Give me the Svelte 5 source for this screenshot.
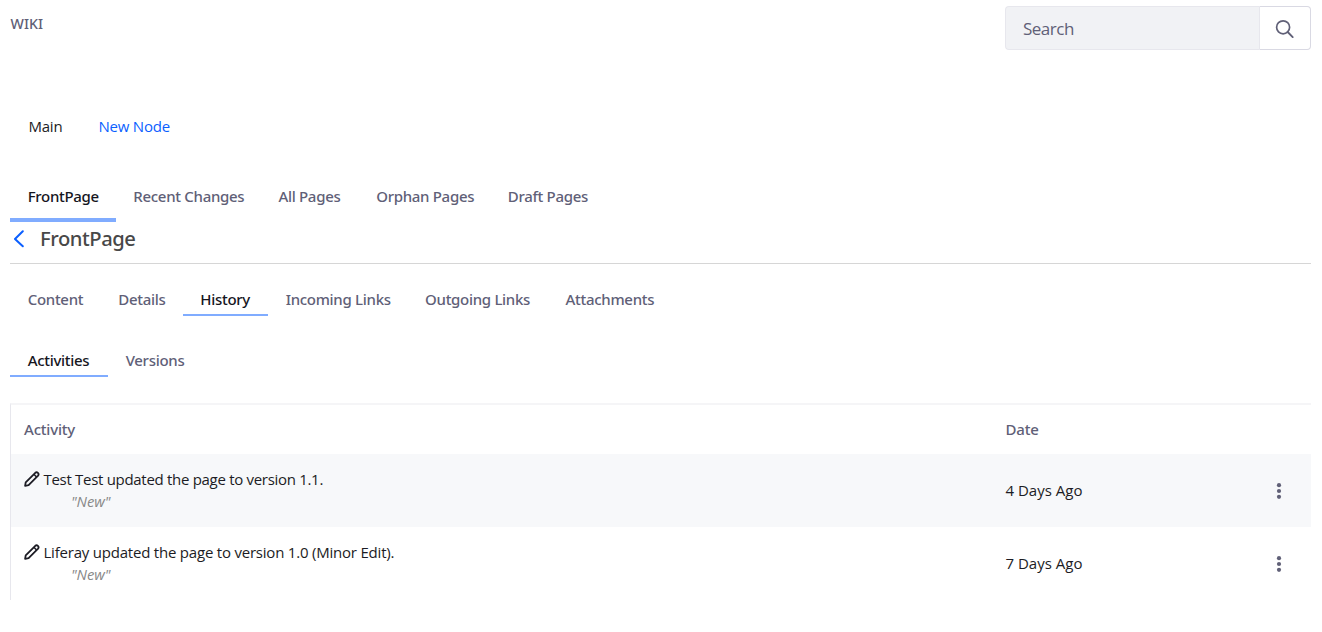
<script>
  const pageTabs = [
    { label: 'FrontPage', width: 105.6, active: true },
    { label: 'Recent Changes', width: 145.1 },
    { label: 'All Pages', width: 97.8 },
    { label: 'Orphan Pages', width: 131.6 },
    { label: 'Draft Pages', width: 115.6 }
  ];
  const viewTabs = [
    { label: 'Content', width: 90.6 },
    { label: 'Details', width: 82 },
    { label: 'History', width: 85.4, active: true },
    { label: 'Incoming Links', width: 139.4 },
    { label: 'Outgoing Links', width: 140.5 },
    { label: 'Attachments', width: 123 }
  ];
  const historyTabs = [
    { label: 'Activities', width: 98, active: true },
    { label: 'Versions', width: 93 }
  ];
  const rows = [
    { text: 'Test Test updated the page to version 1.1.', note: '"New"', date: '4 Days Ago', spacing: -0.3 },
    { text: 'Liferay updated the page to version 1.0 (Minor Edit).', note: '"New"', date: '7 Days Ago', spacing: -0.21 }
  ];
</script>

{#snippet tabs(items, kind)}
  <nav class="tabs {kind}">
    {#each items as tab}
      <a class="tab" class:active={tab.active} style="width: {tab.width}px">{tab.label}</a>
    {/each}
  </nav>
{/snippet}

<main class="portlet">
  <header class="top">
    <h1>WIKI</h1>
    <form class="search">
      <div class="field">Search</div>
      <div class="submit">
        <svg width="20" height="20" viewBox="0 0 20 20" fill="none" stroke="#606077">
          <circle cx="8.1" cy="8.3" r="6.5" stroke-width="1.7" />
          <path d="M12.7 13L17.7 18.1" stroke-width="1.9" stroke-linecap="round" />
        </svg>
      </div>
    </form>
  </header>

  <nav class="nodes">
    <span>Main</span>
    <a>New Node</a>
  </nav>

  {@render tabs(pageTabs, 'primary')}

  <div class="title">
    <svg width="12" height="18" viewBox="0 0 12 18" fill="none" stroke="#0b5fff" stroke-width="2" stroke-linecap="round" stroke-linejoin="round">
      <path d="M9.8 1.3L2 9L9.8 16.3" />
    </svg>
    <h2>FrontPage</h2>
  </div>

  {@render tabs(viewTabs, 'view')}
  {@render tabs(historyTabs, 'history')}

  <section class="table">
    <div class="row head">
      <div>Activity</div>
      <div>Date</div>
      <div></div>
    </div>
    {#each rows as row, i}
      <div class="row" class:striped={i % 2 === 0}>
        <div class="activity">
          <div class="line">
            <svg width="16" height="16" viewBox="0 0 16 16" fill="none" stroke="#1c1c24" stroke-width="1.8" stroke-linejoin="round">
              <path d="M1.1 14.8L1.7 11.4L11.3 1.8Q12.6 .7 13.9 1.9Q15.2 3.2 14.1 4.6L4.6 14.1Z" />
              <path d="M9.9 3.3L12.6 6" stroke-width="1.5" />
            </svg>
            <span class="text" style="letter-spacing: {row.spacing}px">{row.text}</span>
          </div>
          <em>{row.note}</em>
        </div>
        <div class="date">{row.date}</div>
        <div class="actions">
          <svg width="6" height="16" viewBox="0 0 6 16" fill="#606077">
            <circle cx="3" cy="2.2" r="2.1" />
            <circle cx="3" cy="8" r="2.1" />
            <circle cx="3" cy="13.8" r="2.1" />
          </svg>
        </div>
      </div>
    {/each}
  </section>
</main>

<style>
  :global(body) { background: #fff; }
  * { box-sizing: border-box; }
  .portlet {
    padding: 6px 11px 0 10px;
    font: 400 15px/22px "Open Sans", "Noto Sans", sans-serif;
    color: #1c1c24;
  }
  h1, h2 { margin: 0; }
  .top { display: flex; justify-content: space-between; height: 44px; }
  h1 { padding: 7px 0 0 .6px; font: 500 14.2px/22px "Noto Sans", sans-serif; color: #606077; }
  .search { display: flex; width: 306px; height: 44px; }
  .field {
    width: 254px;
    padding-left: 17px;
    border: 1px solid #e7e7ed;
    border-right: 0;
    border-radius: 4px 0 0 4px;
    background: #f1f2f5;
    color: #606077;
    font-size: 17px;
    letter-spacing: -.5px;
    line-height: 43px;
  }
  .submit {
    display: flex;
    align-items: center;
    justify-content: center;
    width: 52px;
    border: 1px solid #d9d9e3;
    border-left-color: #e7e7ed;
    border-radius: 0 4px 4px 0;
    padding: 2px 1px 0 0;
  }
  .nodes { display: flex; gap: 36px; margin-top: 65px; padding-left: 18.4px; font-size: 15px; letter-spacing: -.2px; height: 22px; }
  .nodes a { color: #0b5fff; }
  .tabs { display: flex; font: 500 15px/22px "Noto Sans", sans-serif; letter-spacing: -.3px; color: #606077; }
  .tab { padding-left: 17.7px; white-space: nowrap; border-bottom: 0 solid transparent; }
  .active { color: #16161e; border-color: #80acff; }
  .primary { height: 51px; margin-top: 33.5px; padding-top: 9.5px; }
  .primary .tab { padding-top: 5px; border-bottom-width: 4px; }
  .title { display: flex; align-items: center; height: 42px; padding: 0 0 7px 3px; border-bottom: 1px solid #d6d6d6; }
  .title h2 { margin-left: 15px; padding-bottom: 2px; font: 500 20.2px/26px "Noto Sans", sans-serif; letter-spacing: -.45px; color: #484848; }
  .view { height: 32px; margin-top: 20px; }
  .view .tab, .history .tab { padding-top: 4px; border-bottom-width: 2px; }
  .history { height: 32px; margin-top: 29.5px; }
  .table { margin-top: 26px; border-top: 2px solid #f5f5f7; border-left: 1px solid #e7e7ed; }
  .row { display: grid; grid-template-columns: 981.5px 241.5px 1fr; align-items: center; height: 73px; padding-left: 13px; }
  .head { height: 49px; padding-bottom: 2px; font: 500 15px/22px "Noto Sans", sans-serif; letter-spacing: -.2px; color: #606077; }
  .striped { background: #f7f8fa; }
  .line { display: flex; align-items: center; gap: 3.5px; height: 22px; white-space: nowrap; }
  em { display: block; padding-left: 47px; color: #888; font: italic 400 14.8px/23px "Open Sans", sans-serif; letter-spacing: -.1px; }
  .date { padding-bottom: 2px; }
  .actions { padding-left: 29px; display: flex; }
</style>
